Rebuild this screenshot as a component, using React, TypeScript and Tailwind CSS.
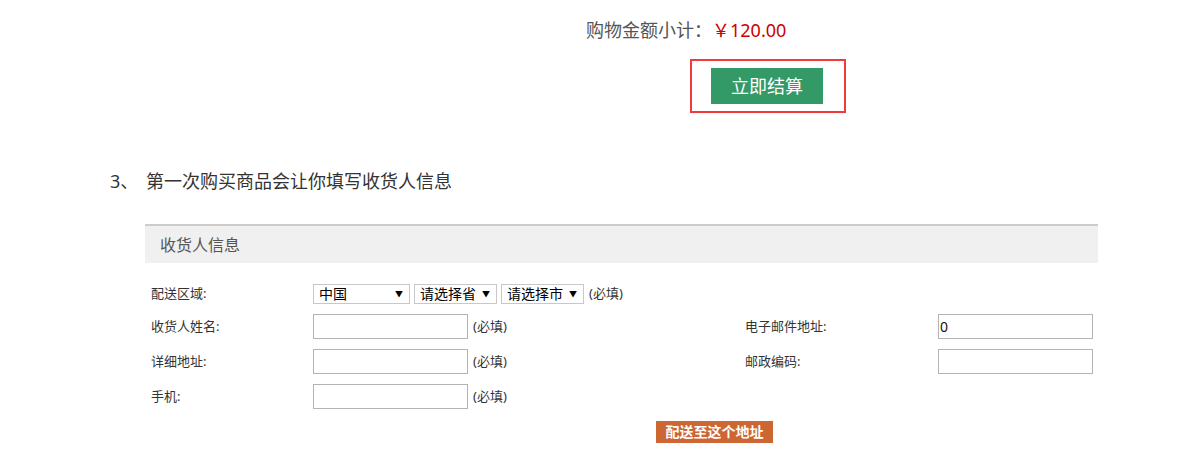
const font = "font-['Noto_Sans','Noto_Sans_CJK_SC',sans-serif]"

function FakeSelect({ label, width }: { label: string; width: string }) {
  return (
    <div className={`${width} h-[20px] shrink-0 border border-[#c8c8c8] flex items-center justify-between pl-[5px] pr-[6px] text-[14px] leading-none text-black`}>
      <span>{label}</span>
      <span className="text-[8px]">▼</span>
    </div>
  )
}

function Field({ value = '' }: { value?: string }) {
  return (
    <div className="w-[155px] h-[25px] shrink-0 border border-[#b3b3b3] flex items-center pl-[1px] text-[14px] leading-none text-[#111]">
      {value}
    </div>
  )
}

function Required() {
  return <span className="ml-[5px] shrink-0 whitespace-nowrap text-[13px] text-[#333]">(必填)</span>
}

function Row({ label, right, rightValue, children, tall = true }: {
  label: string
  right?: string
  rightValue?: string
  children: React.ReactNode
  tall?: boolean
}) {
  return (
    <div className={`${tall ? 'h-[35px]' : 'h-[30px]'} flex items-center whitespace-nowrap`}>
      <div className="w-[600px] shrink-0 flex items-center">
        <span className="w-[168px] shrink-0 pl-[6px]">{label}</span>
        {children}
      </div>
      {right && (
        <>
          <span className="w-[193px] shrink-0">{right}</span>
          <Field value={rightValue} />
        </>
      )}
    </div>
  )
}

export default function App() {
  return (
    <div className={`w-[1180px] h-[453px] bg-white overflow-hidden ${font}`}>
      {/* Subtotal */}
      <div className="pt-[18px] pl-[586px] text-[18px] leading-6 text-[#555] flex">
        <span>购物金额小计：</span>
        <span className="text-[#cc0000]">￥120.00</span>
      </div>

      {/* Checkout button, highlighted */}
      <div className="mt-[17px] ml-[690px] w-[156px] h-[54px] border-2 border-[#f33a3a] pt-[7px] pl-[19px]">
        <button className="w-[112px] h-[36px] bg-[#339966] text-white text-[18px] leading-none">
          立即结算
        </button>
      </div>

      {/* Step heading */}
      <div className="mt-[56px] ml-[110px] flex text-[18px] leading-6 text-[#333]">
        <span className="w-[36px]">3、</span>
        <span>第一次购买商品会让你填写收货人信息</span>
      </div>

      {/* Consignee panel */}
      <div className="mt-[31px] ml-[145px] w-[953px]">
        <div className="h-[39px] border-t-2 border-[#cccccc] bg-[#f0f0f0] flex items-center pl-[15px] text-[16px] text-[#555]">
          收货人信息
        </div>

        <div className="pt-[16px] text-[13px] text-[#333]">
          <Row label="配送区域:" tall={false}>
            <div className="flex items-center gap-[4px]">
              <FakeSelect label="中国" width="w-[97px]" />
              <FakeSelect label="请选择省" width="w-[83px]" />
              <FakeSelect label="请选择市" width="w-[83px]" />
            </div>
            <Required />
          </Row>

          <Row label="收货人姓名:" right="电子邮件地址:" rightValue="0">
            <Field />
            <Required />
          </Row>

          <Row label="详细地址:" right="邮政编码:">
            <Field />
            <Required />
          </Row>

          <Row label="手机:">
            <Field />
            <Required />
          </Row>

          <button className="mt-[7px] ml-[511px] w-[117px] h-[22px] bg-[#cc6633] text-white text-[14px] font-bold leading-none">
            配送至这个地址
          </button>
        </div>
      </div>
    </div>
  )
}
